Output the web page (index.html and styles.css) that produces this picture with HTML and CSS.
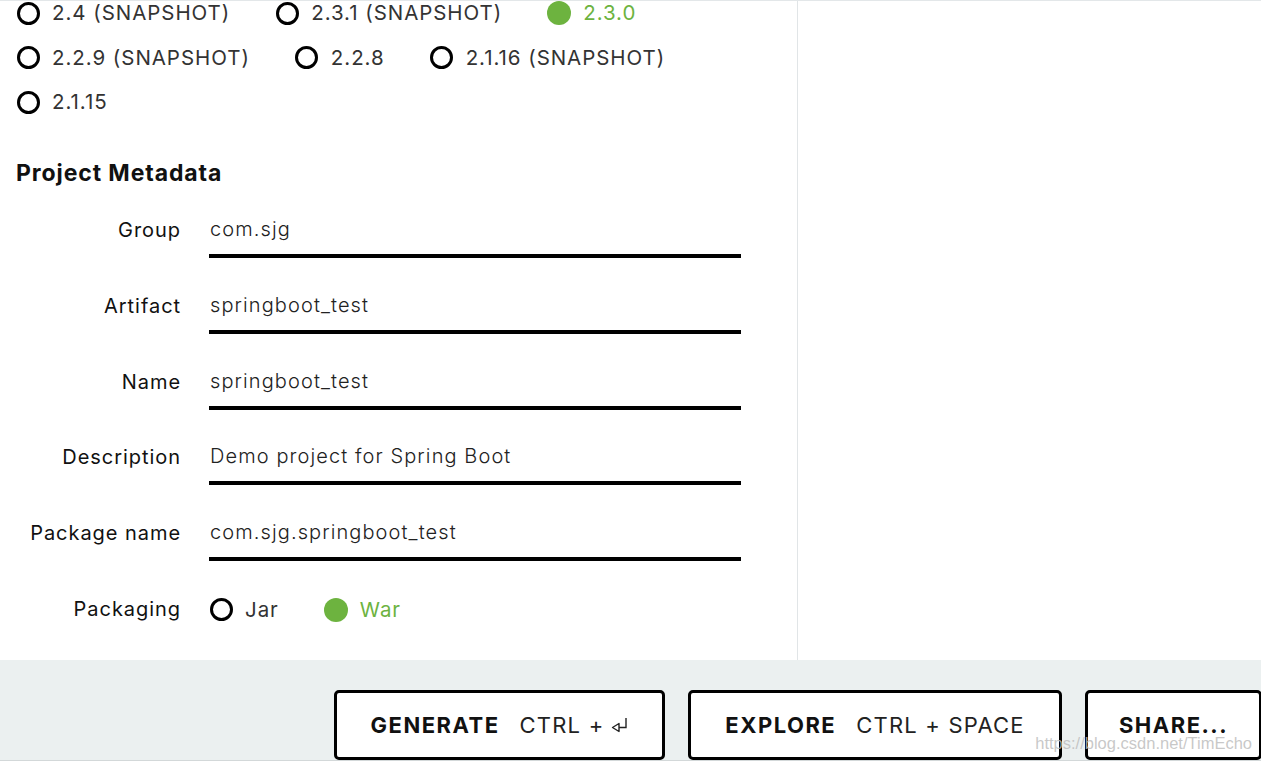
FILE: index.html
```html
<!DOCTYPE html>
<html lang="en">
<head>
<meta charset="utf-8">
<title>Spring Initializr</title>
<link rel="stylesheet" href="styles.css">
</head>
<body>
<div class="page">
  <main class="main">
    <section class="left">
      <div class="versions">
        <div class="radio-row">
          <div class="radio"><span class="dot"></span><span class="radio-text">2.4 (SNAPSHOT)</span></div>
          <div class="radio"><span class="dot"></span><span class="radio-text">2.3.1 (SNAPSHOT)</span></div>
          <div class="radio checked"><span class="dot"></span><span class="radio-text">2.3.0</span></div>
        </div>
        <div class="radio-row">
          <div class="radio"><span class="dot"></span><span class="radio-text">2.2.9 (SNAPSHOT)</span></div>
          <div class="radio"><span class="dot"></span><span class="radio-text">2.2.8</span></div>
          <div class="radio"><span class="dot"></span><span class="radio-text">2.1.16 (SNAPSHOT)</span></div>
        </div>
        <div class="radio-row">
          <div class="radio"><span class="dot"></span><span class="radio-text">2.1.15</span></div>
        </div>
      </div>

      <h2 class="section-title">Project Metadata</h2>

      <div class="form">
        <div class="field">
          <label class="field-label">Group</label>
          <div class="field-input">com.sjg</div>
        </div>
        <div class="field">
          <label class="field-label">Artifact</label>
          <div class="field-input">springboot_test</div>
        </div>
        <div class="field">
          <label class="field-label">Name</label>
          <div class="field-input">springboot_test</div>
        </div>
        <div class="field">
          <label class="field-label">Description</label>
          <div class="field-input">Demo project for Spring Boot</div>
        </div>
        <div class="field">
          <label class="field-label">Package name</label>
          <div class="field-input">com.sjg.springboot_test</div>
        </div>
        <div class="field field-packaging">
          <label class="field-label">Packaging</label>
          <div class="radio-row packaging-options">
            <div class="radio"><span class="dot"></span><span class="radio-text">Jar</span></div>
            <div class="radio checked"><span class="dot"></span><span class="radio-text">War</span></div>
          </div>
        </div>
      </div>
    </section>
    <section class="right"></section>
  </main>

  <footer class="footer">
    <button class="action action-generate"><strong>GENERATE</strong><span class="shortcut">CTRL + <svg class="enter-icon" width="17" height="16" viewBox="0 0 17 16"><path d="M15 1 V10.5 H8" fill="none" stroke="#222" stroke-width="1.4"/><path d="M8 6.5 L1.5 10.5 L8 14.5 Z" fill="none" stroke="#222" stroke-width="1.4" stroke-linejoin="round"/></svg></span></button>
    <button class="action action-explore"><strong>EXPLORE</strong><span class="shortcut">CTRL + SPACE</span></button>
    <button class="action action-share"><strong>SHARE...</strong></button>
  </footer>

  <span class="watermark">https://blog.csdn.net/TimEcho</span>
</div>
</body>
</html>
```

FILE: styles.css
```css
* {
  box-sizing: border-box;
}

html, body {
  margin: 0;
  padding: 0;
  background: #fff;
}

body {
  font-family: Inter, "Noto Sans", sans-serif;
  color: #222;
  overflow: hidden;
}

.page {
  position: relative;
  width: 1261px;
  height: 761px;
  overflow: hidden;
}

.main {
  display: flex;
  height: 660px;
  border-top: 1px solid #e3e7e9;
}

.left {
  width: 798px;
  flex-shrink: 0;
  border-right: 1px solid #e1e5e7;
  padding-left: 16px;
}

.right {
  flex: 1;
}

.versions {
  display: flex;
  flex-direction: column;
  gap: 20.5px;
}

.radio-row {
  display: flex;
  align-items: center;
  height: 24px;
}

.radio {
  display: flex;
  align-items: center;
  gap: 12px;
  margin-right: 45px;
  height: 24px;
  font-size: 20.5px;
  line-height: 24px;
  letter-spacing: 0.95px;
  color: #333;
  white-space: nowrap;
}

.dot {
  width: 24px;
  height: 24px;
  display: flex;
  align-items: center;
  justify-content: center;
  flex-shrink: 0;
}

.dot::before {
  content: "";
  width: 17px;
  height: 17px;
  border: 3px solid #000;
  border-radius: 50%;
}

.radio.checked .dot::before {
  width: 24px;
  height: 24px;
  border: none;
  background: #6db33f;
}

.radio.checked .radio-text {
  color: #6db33f;
}

.section-title {
  margin: 44px 0 0;
  font-size: 23px;
  line-height: 30px;
  font-weight: 700;
  letter-spacing: 0.9px;
  color: #111;
}

.form {
  margin-top: 26px;
  display: flex;
  flex-direction: column;
  gap: 31.8px;
}

.field {
  display: flex;
  align-items: flex-start;
  height: 44px;
}

.field-label {
  width: 165px;
  margin-right: 28px;
  padding-top: 1px;
  text-align: right;
  font-size: 20px;
  line-height: 30px;
  letter-spacing: 0.95px;
  color: #111;
  white-space: nowrap;
}

.field-input {
  width: 532px;
  height: 44px;
  border-bottom: 4px solid #000;
  padding-left: 1px;
  font-size: 20px;
  line-height: 30px;
  font-weight: 300;
  letter-spacing: 1.1px;
  color: #222;
  white-space: nowrap;
}

.packaging-options {
  padding-top: 5px;
  height: 29px;
}

.footer {
  display: flex;
  gap: 23px;
  height: 101px;
  padding: 30px 0 0 334px;
  background: #ebf0f0;
  border-bottom: 1px solid #d3d8d9;
  overflow: hidden;
}

.action {
  display: flex;
  align-items: center;
  justify-content: center;
  gap: 20px;
  flex-shrink: 0;
  height: 70px;
  border: 3px solid #000;
  border-radius: 5px;
  background: #fff;
  padding: 0;
  font-family: inherit;
  font-size: 22px;
  color: #111;
  white-space: nowrap;
}

.action strong {
  font-weight: 700;
  letter-spacing: 1.5px;
}

.shortcut {
  display: inline-flex;
  align-items: center;
  gap: 7px;
  font-weight: 400;
  letter-spacing: 1.2px;
  color: #222;
}

.action-generate {
  width: 331px;
}

.action-explore {
  width: 374px;
}

.action-share {
  width: 177px;
}

.enter-icon {
  display: block;
}

.watermark {
  position: absolute;
  right: 9px;
  bottom: 8px;
  font-family: "Liberation Sans", Arial, sans-serif;
  font-size: 16.5px;
  color: rgba(190, 190, 190, 0.85);
  white-space: nowrap;
}
```
